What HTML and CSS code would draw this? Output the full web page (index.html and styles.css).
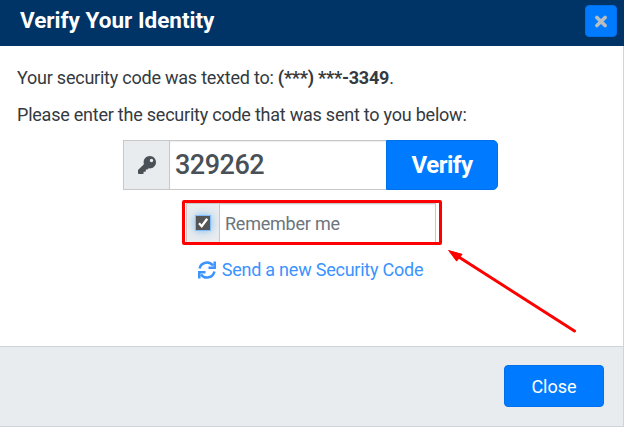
FILE: index.html
```
<!DOCTYPE html>
<html lang="en">
<head>
  <meta charset="UTF-8">
  <meta name="viewport" content="width=device-width, initial-scale=1.0">
  <title>Verify Your Identity</title>
  <link rel="stylesheet" href="styles.css">
</head>
<body>
  <div class="modal">
    <div class="modal-header">
      <h1>Verify Your Identity</h1>
      <button type="button" class="btn btn-x" aria-label="Close">
        <svg width="14" height="13" viewBox="0 0 14 13"><path d="M2.9 2.4 L11.1 10.6 M11.1 2.4 L2.9 10.6" stroke="#b8bdc2" stroke-width="3.6" stroke-linecap="round"/></svg>
      </button>
    </div>

    <div class="modal-body">
      <p>Your security code was texted to: <b>(***) ***-3349</b>.</p>
      <p>Please enter the security code that was sent to you below:</p>

      <form class="code-form">
        <div class="input-group">
          <span class="addon">
            <svg width="18" height="18" viewBox="0 0 512 512"><path fill="#495057" d="M512 176.001C512 273.203 433.202 352 336 352c-11.220 0-22.190-1.062-32.827-3.069l-24.012 27.014A23.999 23.999 0 0 1 261.223 384H224v40c0 13.255-10.745 24-24 24h-40v40c0 13.255-10.745 24-24 24H24c-13.255 0-24-10.745-24-24v-78.059c0-6.365 2.529-12.470 7.029-16.971l161.802-161.802C163.108 213.814 160 195.271 160 176 160 78.798 238.797.001 335.999 0 433.488-.001 512 78.511 512 176.001zM336 128c0 26.510 21.490 48 48 48s48-21.490 48-48-21.490-48-48-48-48 21.490-48 48z"/></svg>
          </span>
          <input type="text" class="code" value="329262">
          <button type="button" class="btn verify">Verify</button>
        </div>

        <div class="remember">
          <span class="check-addon">
            <span class="check">
              <svg width="14" height="14" viewBox="0 0 14 14"><path d="M3 7.3 L5.7 10.2 L11.2 2.8" fill="none" stroke="#fff" stroke-width="2.3"/></svg>
            </span>
          </span>
          <label>Remember me</label>
          <div class="highlight"></div>
        </div>

        <a class="resend">
          <svg width="18" height="18" viewBox="0 0 18 18">
            <g fill="none" stroke="#3a93ff" stroke-width="2.5">
              <path d="M1.6 7.6 A7.5 7.5 0 0 1 15 4.6"/>
              <path d="M16.4 10.4 A7.5 7.5 0 0 1 3 13.4"/>
              <path d="M16.7 0.5 V6.7 H10.5"/>
              <path d="M1.3 17.5 V11.3 H7.5"/>
            </g>
          </svg>
          <span>Send a new Security Code</span>
        </a>
      </form>
    </div>

    <div class="modal-footer">
      <button type="button" class="btn close">Close</button>
    </div>

    <!-- arrow pointing at the remember box -->
    <svg class="arrow" width="135" height="90" viewBox="0 0 135 90">
      <path d="M12 8.5 L128.5 83" stroke="#f00" stroke-width="3" stroke-linecap="round"/>
      <path d="M2 2 L16.5 6 L11 13 L10 12.5 Z" fill="#f00"/>
      <path d="M2 2 L16.5 6.2 L10.5 13.5 Z" fill="#f00"/>
    </svg>
  </div>
</body>
</html>
```
FILE: styles.css
```
* {
  box-sizing: border-box;
}

body {
  margin: 0;
  font-family: Roboto, "Liberation Sans", sans-serif;
  font-size: 18px;
  line-height: 27px;
  letter-spacing: -.23px;
  color: #343a40;
  background: #fff;
}

.modal {
  position: relative;
  display: flex;
  flex-direction: column;
  height: 427px;
}

.modal-header {
  display: flex;
  justify-content: space-between;
  align-items: flex-start;
  height: 46px;
  padding: 5px 7px 0 20px;
  background: #003366;
  color: #fff;
}

.modal-header h1 {
  margin: 0;
  font-size: 22.5px;
  line-height: 31px;
  letter-spacing: 0;
  font-weight: 700;
}

.btn {
  display: flex;
  align-items: center;
  justify-content: center;
  padding: 0;
  border: 1px solid #0071eb;
  border-radius: 4px;
  background: #007bff;
  color: #fff;
  font-family: inherit;
}

.btn-x {
  width: 32px;
  height: 32px;
}

.modal-body {
  flex: 1;
  padding: 18px 16px 0 17px;
  border-right: 1px solid #ced4da;
}

.modal-body p {
  margin: 0 0 10px;
}

.code-form {
  display: flex;
  flex-direction: column;
  align-items: center;
  margin: 0;
  padding: 2px 3px 0 0;
}

.input-group {
  display: flex;
  width: 375px;
  height: 50px;
}

.addon {
  display: flex;
  align-items: center;
  justify-content: center;
  width: 46px;
  border: 1px solid #c8c8c8;
  border-right: 0;
  background: #e9ecef;
}

.code {
  width: 217px;
  padding: 0 5px;
  border: 1px solid #c8c8c8;
  border-right: 0;
  border-radius: 0;
  outline: 0;
  box-shadow: inset 0 1px 1px rgba(0, 0, 0, .075);
  font-family: inherit;
  font-size: 27px;
  letter-spacing: -.5px;
  font-weight: 500;
  color: #495057;
}

.verify {
  width: 112px;
  border-radius: 0 5px 5px 0;
  font-size: 24px;
  letter-spacing: -.5px;
  font-weight: 700;
}

.remember {
  position: relative;
  display: flex;
  width: 250px;
  height: 40px;
  margin: 13px 0 0 1px;
  border: 1px solid #c8c8c8;
  box-shadow: inset 0 1px 1px rgba(0, 0, 0, .075);
}

.check-addon {
  display: flex;
  align-items: center;
  justify-content: center;
  width: 33px;
  border-right: 1px solid #c8c8c8;
  background: #e9ecef;
}

.check {
  display: flex;
  width: 16px;
  height: 16px;
  border: 1px solid #80bdff;
  background: #555;
  box-shadow: 0 0 8px rgba(102, 175, 233, .8);
}

.remember label {
  padding-left: 5px;
  line-height: 40px;
  color: #6c757d;
}

.highlight {
  position: absolute;
  left: -5px;
  top: -4px;
  width: 260px;
  height: 45px;
  border: 3px solid #f00;
  border-radius: 2px;
}

.resend {
  display: flex;
  align-items: center;
  gap: 6px;
  margin-top: 13px;
  color: #3a93ff;
}

.modal-footer {
  display: flex;
  justify-content: flex-end;
  height: 81px;
  padding: 18px 19px 0;
  border: 1px solid #ced4da;
  border-left: 0;
  background: #e9ecef;
}

.close {
  width: 100px;
  height: 42px;
  font-size: 18px;
}

.arrow {
  position: absolute;
  left: 446px;
  top: 248px;
}
```
